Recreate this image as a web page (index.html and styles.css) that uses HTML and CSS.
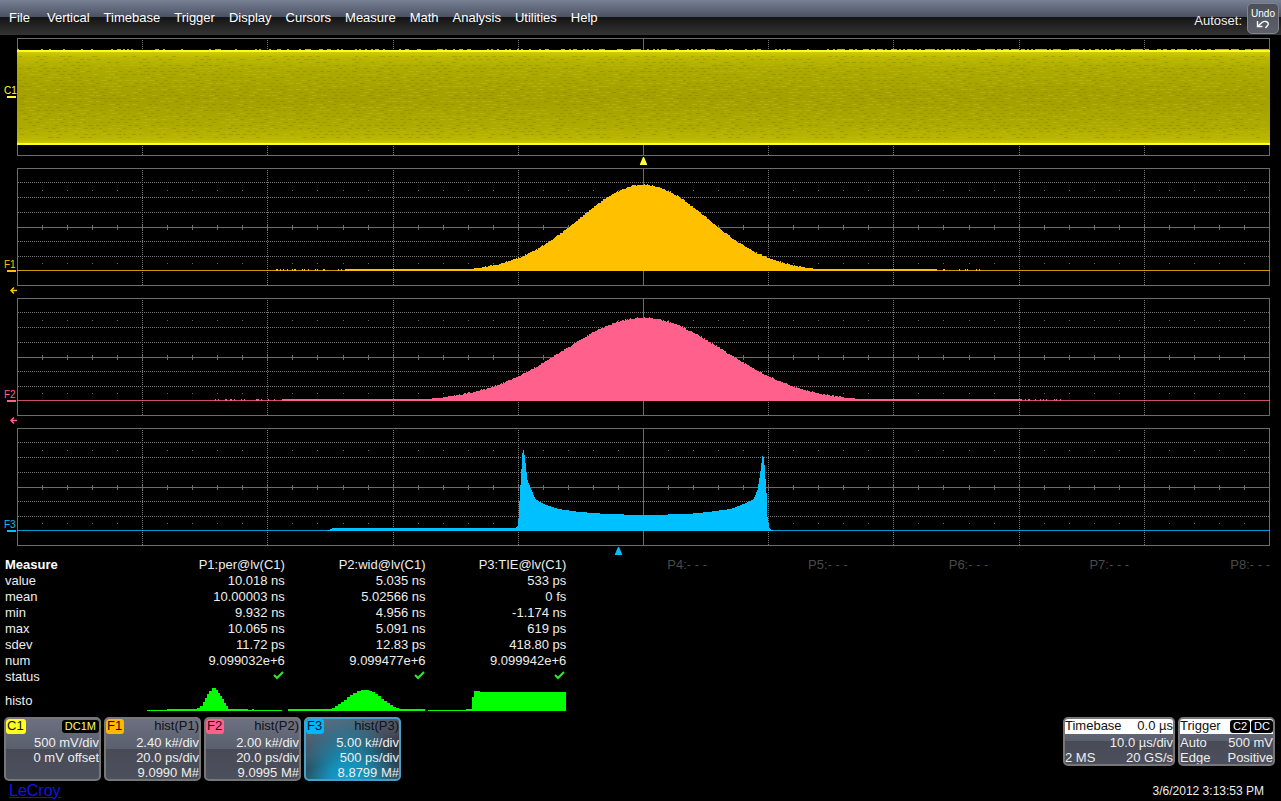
FILE: index.html
```html
<!DOCTYPE html>
<html lang="en">
<head>
<meta charset="utf-8">
<title>Oscilloscope</title>
<link rel="stylesheet" href="styles.css">
</head>
<body>
<header class="menubar">
  <nav class="menu">
    <button>File</button><button>Vertical</button><button>Timebase</button><button>Trigger</button><button>Display</button><button>Cursors</button><button>Measure</button><button>Math</button><button>Analysis</button><button>Utilities</button><button>Help</button>
  </nav>
  <div class="autoset">
    <span>Autoset:</span>
    <button class="undo">Undo
      <svg width="14" height="9" viewBox="0 0 14 9"><path d="M1.500 1v5.500h5M2 6l4-3.500q2-1.500 4-1 3 1 2 3.500l-2.500 3" fill="none" stroke="#fff" stroke-width="1.400"/></svg>
    </button>
  </div>
</header>

<main class="traces">
  <section class="trace c1">
    <div class="gutter"><span class="tag">C1</span></div>
    <svg class="plot" data-kind="c1" viewBox="0 0 1253 118" preserveAspectRatio="none"></svg>
    <svg class="pointer mid" viewBox="0 0 9 8"><path d="M4 0h1l3 7v1H1V7z"/></svg>
  </section>
  <section class="trace f1">
    <div class="gutter"><span class="tag">F1</span></div>
    <svg class="plot" data-kind="f1" viewBox="0 0 1253 118" preserveAspectRatio="none"></svg>
    <svg class="arrow" viewBox="0 0 7 7"><path d="M1 3.500h6M4 .5L1 3.500l3 3"/></svg>
  </section>
  <section class="trace f2">
    <div class="gutter"><span class="tag">F2</span></div>
    <svg class="plot" data-kind="f2" viewBox="0 0 1253 118" preserveAspectRatio="none"></svg>
    <svg class="arrow" viewBox="0 0 7 7"><path d="M1 3.500h6M4 .5L1 3.500l3 3"/></svg>
  </section>
  <section class="trace f3">
    <div class="gutter"><span class="tag">F3</span></div>
    <svg class="plot" data-kind="f3" viewBox="0 0 1253 118" preserveAspectRatio="none"></svg>
    <svg class="pointer early" viewBox="0 0 9 8"><path d="M4 0h1l3 7v1H1V7z"/></svg>
  </section>
</main>

<table class="measure">
  <thead>
    <tr><th class="name" scope="col">Measure</th><th scope="col">P1:per@lv(C1)</th><th scope="col">P2:wid@lv(C1)</th><th scope="col">P3:TIE@lv(C1)</th><th class="off" scope="col">P4:- - -</th><th class="off" scope="col">P5:- - -</th><th class="off" scope="col">P6:- - -</th><th class="off" scope="col">P7:- - -</th><th class="off" scope="col">P8:- - -</th></tr>
  </thead>
  <tbody>
    <tr><th scope="row">value</th><td>10.018 ns</td><td>5.035 ns</td><td>533 ps</td><td colspan="5"></td></tr>
    <tr><th scope="row">mean</th><td>10.00003 ns</td><td>5.02566 ns</td><td>0 fs</td><td colspan="5"></td></tr>
    <tr><th scope="row">min</th><td>9.932 ns</td><td>4.956 ns</td><td>-1.174 ns</td><td colspan="5"></td></tr>
    <tr><th scope="row">max</th><td>10.065 ns</td><td>5.091 ns</td><td>619 ps</td><td colspan="5"></td></tr>
    <tr><th scope="row">sdev</th><td>11.72 ps</td><td>12.83 ps</td><td>418.80 ps</td><td colspan="5"></td></tr>
    <tr><th scope="row">num</th><td>9.099032e+6</td><td>9.099477e+6</td><td>9.099942e+6</td><td colspan="5"></td></tr>
    <tr class="status"><th scope="row">status</th>
      <td><svg class="check" viewBox="0 0 12 10"><path d="M1 5l3 3 6-6"/></svg></td>
      <td><svg class="check" viewBox="0 0 12 10"><path d="M1 5l3 3 6-6"/></svg></td>
      <td><svg class="check" viewBox="0 0 12 10"><path d="M1 5l3 3 6-6"/></svg></td><td colspan="5"></td></tr>
    <tr class="histo"><th scope="row">histo</th>
      <td><svg viewBox="0 0 138 24" preserveAspectRatio="none"><path d="M0 24v-1h20v-1h30v-1h3v-2h3v-4h2v-4h2V7h2V4h3V1h4v2h2v3h2v3h2v3h2v4h2v3h2v3h20v1h4v-1h2v1h28v1z"/></svg></td>
      <td><svg viewBox="0 0 138 24" preserveAspectRatio="none"><path d="M0 24v-2h44v-1h3v-2h3v-2h3v-2h3v-2h3v-3h3V8h3V6h4V4h4V3h8v1h3v1h3v2h3v2h3v3h3v2h3v2h3v2h3v2h3v1h3v1h26v2z"/></svg></td>
      <td><svg viewBox="0 0 138 24" preserveAspectRatio="none"><path d="M0 24v-1h38v-1h6V10h2V4h6v1h86v19z"/></svg></td><td colspan="5"></td></tr>
  </tbody>
</table>

<footer class="footer">
  <div class="boxes">
    <section class="box">
      <h2 class="head"><span class="chip yellow">C1</span><span class="badge amber">DC1M</span></h2>
      <p>500 mV/div</p><p>0 mV offset</p>
    </section>
    <section class="box">
      <h2 class="head"><span class="chip orange">F1</span><span>hist(P1)</span></h2>
      <p>2.40 k#/div</p><p>20.0 ps/div</p><p>9.0990 M#</p>
    </section>
    <section class="box">
      <h2 class="head"><span class="chip pink">F2</span><span>hist(P2)</span></h2>
      <p>2.00 k#/div</p><p>20.0 ps/div</p><p>9.0995 M#</p>
    </section>
    <section class="box active">
      <h2 class="head"><span class="chip blue">F3</span><span>hist(P3)</span></h2>
      <p>5.00 k#/div</p><p>500 ps/div</p><p>8.8799 M#</p>
    </section>
  </div>
  <div class="boxes right">
    <section class="box wide">
      <h2 class="head white"><span>Timebase</span><span>0.0 µs</span></h2>
      <p>10.0 µs/div</p><p class="pair"><span>2 MS</span><span>20 GS/s</span></p>
    </section>
    <section class="box">
      <h2 class="head white"><span>Trigger</span><span class="badges"><span class="badge">C2</span><span class="badge">DC</span></span></h2>
      <p class="pair"><span>Auto</span><span>500 mV</span></p><p class="pair"><span>Edge</span><span>Positive</span></p>
    </section>
  </div>
</footer>
<div class="bottom"><a class="brand" href="#">LeCroy</a><time>3/6/2012 3:13:53 PM</time></div>
<script src="plots.js"></script>
</body>
</html>
```
FILE: styles.css
```css
* { box-sizing: border-box; }
body {
  margin: 0;
  background: #000;
  color: #eee;
  font: 13px/16px "Liberation Sans", Arial, sans-serif;
}
button { font: inherit; color: #fff; background: none; border: 0; padding: 0; }
svg { display: block; }

.menubar {
  display: flex;
  justify-content: space-between;
  height: 35px;
  background: linear-gradient(#788094 0, #4a5162 17px, #141414 17px, #343434 100%);
}
.menu { display: flex; align-items: center; padding-left: 2px; }
.menu button { padding: 0 7px; height: 35px; }
.menu button:first-child { padding-right: 10px; }
.autoset { display: flex; align-items: flex-start; gap: 5px; padding-right: 2px; }
.autoset > span { padding-top: 13px; }
.undo {
  display: flex;
  flex-direction: column;
  align-items: center;
  justify-content: center;
  width: 32px;
  height: 31px;
  margin-top: 3px;
  border: 1px solid #82848a;
  border-radius: 5px;
  background: linear-gradient(#4b4f59, #5d616d);
  font-size: 10px;
  line-height: 12px;
}

.traces { padding-top: 3px; }
.trace {
  display: grid;
  grid-template-columns: 17px 1fr 11px;
  grid-template-rows: 118px 12px;
  color: var(--ink);
}
.trace.c1 { --ink: #ffff32; }
.trace.f1 { --ink: #ffc000; }
.trace.f2 { --ink: #ff608c; }
.trace.f3 { --ink: #00c0ff; }
.gutter { padding: 92px 1px 0 4px; font-size: 10px; line-height: 10px; }
.c1 .gutter { padding-top: 48px; }
.tag { display: block; }
.tag::after { content: ""; display: block; height: 2px; margin-left: 3px; background: var(--ink); }
.plot { width: 100%; height: 118px; shape-rendering: crispEdges; }
.pointer { grid-column: 2; width: 9px; height: 8px; margin-top: 1px; justify-self: center; fill: var(--ink); }
.pointer.early { justify-self: start; margin-left: calc(48% - 4px); }
.arrow { grid-column: 1; grid-row: 2; width: 7px; height: 7px; margin-top: 1px; justify-self: end; overflow: visible; fill: none; stroke: var(--ink); stroke-width: 1.5; }

.frame { fill: none; stroke: #6c6c6c; }
.solid { fill: none; stroke: #6c6c6c; }
.dots { fill: none; stroke: #777; stroke-dasharray: 1 1; }
.specks { fill: none; stroke: #666; }
.curve { fill: var(--ink); }
.base { stroke: var(--ink); opacity: .8; }
.grain-dark { stroke: #858200; opacity: .4; }
.grain-light { stroke: #c4c021; opacity: .4; }
.edge { fill: #ffff22; }
.fuzz { fill: #b8b41c; }

.measure {
  width: calc(100% - 16px);
  margin-left: 5px;
  margin-top: -1px;
  border-collapse: collapse;
  table-layout: fixed;
}
.measure th, .measure td { padding: 0; height: 16px; font-weight: normal; text-align: right; white-space: nowrap; }
.measure tbody th, .measure .name { text-align: left; }
.measure .name { width: 11%; font-weight: bold; color: #fff; }
.measure .off { color: #4a4a4a; }
.measure .status td { vertical-align: top; }
.check { width: 12px; height: 10px; margin-top: 1px; margin-left: auto; fill: none; stroke: #2ee82e; stroke-width: 2; }
.measure .histo th { height: 26px; padding-top: 6px; }
.histo td { vertical-align: bottom; }
.histo svg { width: 98%; height: 24px; margin-left: auto; fill: #0f0; shape-rendering: crispEdges; }

.footer { display: flex; justify-content: space-between; align-items: flex-start; padding: 6px 6px 0 4px; }
.boxes { display: flex; gap: 3px; }
.box {
  width: 97px;
  height: 64px;
  border: 2px solid #777;
  border-radius: 5px;
  background: linear-gradient(#6c7080, #5a5f6e 50%, #484b56 50%, #4c505c);
  line-height: 15px;
  text-align: right;
  overflow: hidden;
}
.right .box { height: 49px; }
.box.wide { width: 112px; }
.box.active {
  border-color: #4aa0c4;
  background: radial-gradient(ellipse at 45% 115%, #10a8dc 0, #1590b8 28%, transparent 75%), linear-gradient(165deg, #5c7484, #464b5a 45%, #30313c 60%, #34495a);
}
.box p { margin: 0; white-space: nowrap; }
.head {
  display: flex;
  justify-content: space-between;
  height: 15px;
  margin: 0 0 1px;
  color: #111;
  font-size: 13px;
  font-weight: normal;
  line-height: 14px;
}
.head.white { background: #fff; }
.chip { padding: 0 2px 0 1px; border-radius: 3px; color: #111; }
.yellow { background: #ffff20; }
.orange { background: #ffb800; }
.pink { background: #ff608c; }
.blue { background: #00b8ff; }
.badges { display: flex; gap: 1px; }
.badge {
  height: 13px;
  margin-top: 1px;
  padding: 0 3px;
  border-radius: 3px;
  background: #000;
  color: #fff;
  font-size: 11px;
  line-height: 13px;
}
.amber { color: #ffff60; }
.pair { display: flex; justify-content: space-between; }

.bottom { display: flex; justify-content: space-between; align-items: center; padding: 0 17px 0 9px; font-size: 12px; line-height: 20px; }
.brand { color: #1414e6; font-size: 16px; }
```
FILE: plots.js
```js
const NS = "http://www.w3.org/2000/svg";
const W = 1253, BASE = 102;
let seed = 7;
const rand = () => (seed = (seed * 16807) % 2147483647) / 2147483647;

function add(svg, tag, cls, attrs) {
  const el = document.createElementNS(NS, tag);
  if (cls) el.setAttribute("class", cls);
  for (const k in attrs) el.setAttribute(k, attrs[k]);
  svg.append(el);
  return el;
}

const division = i => Math.round(i * 125.2) + 0.5;

function drawGrid(svg, full) {
  let dots = "", solid = `M${division(5)} 0V118`, specks = "";
  for (let i = 1; i < 10; i++) if (i !== 5) dots += `M${division(i)} 0V118`;
  if (full) {
    for (const y of [14, 29, 44, 73, 88]) dots += `M1 ${y + 0.5}H${W}`;
    solid += `M0 59.5H${W}`;
    for (let i = 1; i < 50; i++) {
      const x = Math.round(i * 25.04) + 0.5;
      solid += `M${x} 57V62`;
      if (i % 5) specks += `M${x} 22v1M${x} 95v1`;
    }
  }
  add(svg, "path", "dots", { d: dots });
  add(svg, "path", "solid", { d: solid });
  add(svg, "path", "specks", { d: specks });
  add(svg, "rect", "frame", { x: 0.5, y: 0.5, width: W - 1, height: 117 });
}

function drawBand(svg) {
  const g = add(svg, "linearGradient", "", { id: "band", x1: 0, y1: 0, x2: 0, y2: 1 });
  for (const [o, c] of [[0, "#d8d400"], [.08, "#bcb800"], [.2, "#adaa00"], [.5, "#a3a000"], [.8, "#adaa00"], [.94, "#bab700"], [1, "#d8d400"]])
    add(g, "stop", "", { offset: o, "stop-color": c });
  add(svg, "rect", "", { x: 0, y: 12, width: W, height: 95, fill: "url(#band)" });
  let dark = "", light = "", top = "";
  for (let row = 0; row < 28; row++)
    for (let x = 2 + (row % 2) * 4; x < W - 8; x += 8) {
      const r = rand();
      const s = `M${x + Math.round(r * 2)} ${18.5 + row * 3}h${3 + Math.round(r * 3)}`;
      if (r < 0.55) dark += s; else if (r < 0.9) light += s;
    }
  add(svg, "path", "grain-dark", { d: dark });
  add(svg, "path", "grain-light", { d: light });
  for (let x = 0; x < W; x += 2)
    if (rand() < 0.15 + 0.5 * x / W) top += `M${x} 11h2v1h-2z`;
  add(svg, "path", "fuzz", { d: top });
  add(svg, "path", "edge", { d: `M0 12H${W}v2H0zM0 105H${W}v2H0z` });
}

function drawHistogram(svg, height) {
  let d = `M0 ${BASE + 1}`;
  for (let x = 0; x < W; x += 1) d += `V${(BASE + 1 - height(x)).toFixed(1)}H${x + 1}`;
  add(svg, "path", "curve", { d: d + `V${BASE + 1}Z` });
  add(svg, "path", "base", { d: `M0 ${BASE + 0.5}H${W}` });
}

const bell = (peak, sigma, from, to) => x => {
  const h = peak * Math.exp(-((x - 626) ** 2) / (2 * sigma * sigma));
  const jitter = h > 4 ? rand() * 1.4 - 0.4 : 0;
  const inside = x > from && x < to;
  const near = x > from - 70 && x < to + 50 && rand() < 0.25;
  return Math.max(h + jitter, inside || near ? 2 : 0);
};

const TIE = [[0, 0], [308, 0], [316, 3], [498, 3], [500, 5], [501, 12], [502, 30], [504, 62], [505, 78], [506, 81], [507, 76], [508, 68], [510, 51], [513, 43], [518, 32], [526, 27], [541, 22], [563, 19], [590, 17], [626, 16], [670, 17], [690, 19], [713, 22], [726, 27], [736, 32], [740, 41], [742, 53], [744, 68], [745, 75], [746, 74], [747, 66], [749, 38], [750, 14], [752, 3], [756, 0], [1253, 0]];
function tie(x) {
  const i = TIE.findIndex(p => p[0] > x);
  const [a, b] = [TIE[i - 1], TIE[i]];
  return a[1] + (b[1] - a[1]) * (x - a[0]) / (b[0] - a[0]);
}

const shapes = { f1: bell(86, 64, 327, 920), f2: bell(83, 80, 265, 1005), f3: tie };
for (const svg of document.querySelectorAll(".plot")) {
  const kind = svg.dataset.kind;
  drawGrid(svg, kind !== "c1");
  if (kind === "c1") drawBand(svg);
  else drawHistogram(svg, shapes[kind]);
}
```
